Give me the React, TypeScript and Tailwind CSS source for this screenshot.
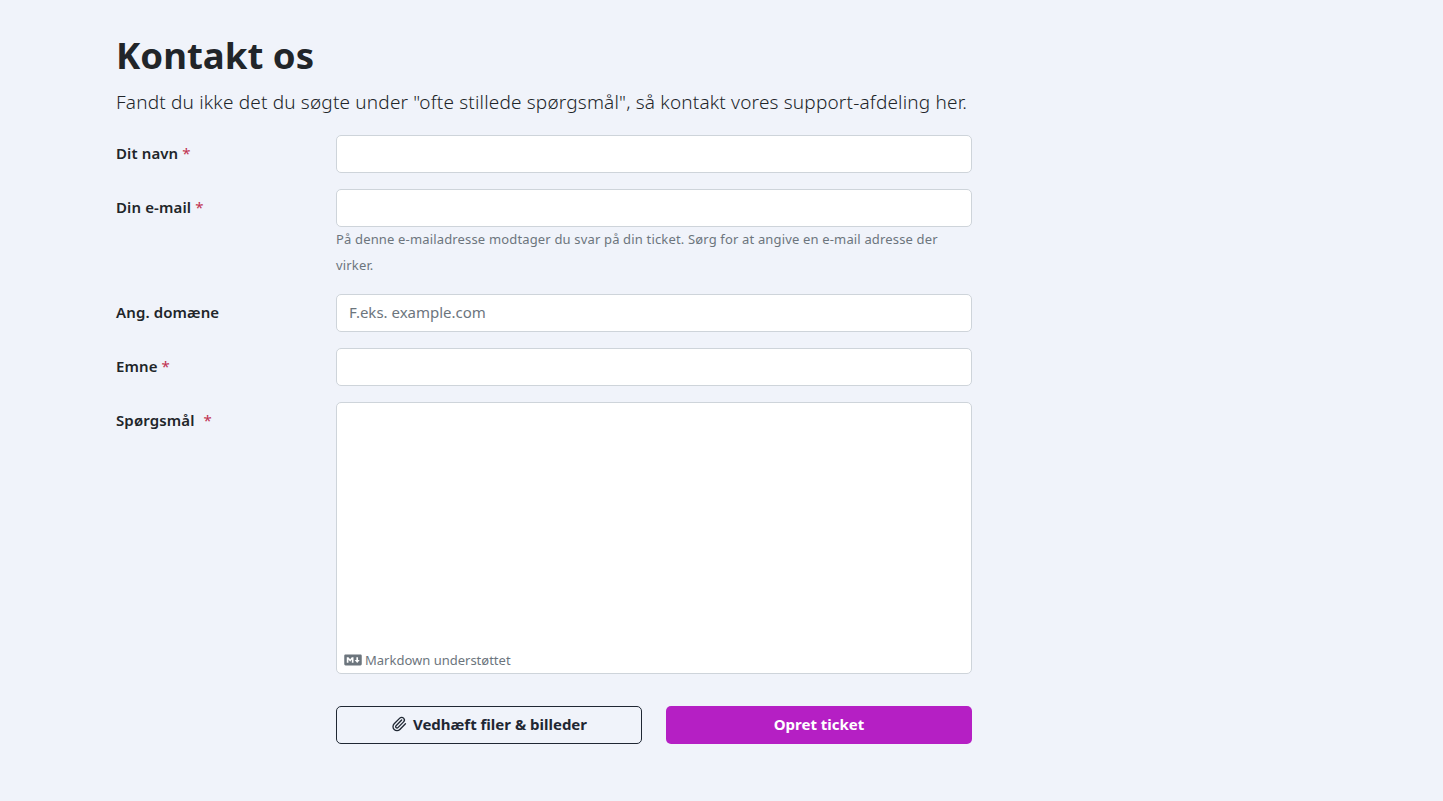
import { FaMarkdown } from 'react-icons/fa';
import { Paperclip } from 'lucide-react';

const inputClass = 'block h-[38px] w-full rounded-[5px] border border-[#ced4da] bg-white px-3 pb-[2px] text-[15px] text-[#212529] placeholder:text-[#6c757d]';

function Label({ text, required, gap }: { text: string; required?: boolean; gap?: string }) {
  return (
    <label className="block w-[220px] shrink-0 pt-[8px] text-[15px] leading-[20px] font-semibold tracking-[0.12px] text-[#212529]">
      {text}
      {required && <span className={`${gap ?? 'ml-[4px]'} font-normal text-[#c0304f]`}>*</span>}
    </label>
  );
}

export default function App() {
  return (
    <div className="min-h-[801px] bg-[#f0f3fa] pl-[116px] pt-[32px] font-['Noto_Sans','Open_Sans',sans-serif] text-[#212529]">
      <div className="w-[856px]">
        <h1 className="text-[36.6px] leading-[46px] font-bold text-[#212529]">Kontakt os</h1>
        <p className="mt-[11px] text-[19px] leading-[27px] font-light tracking-[0.18px] text-[#212529]">
          Fandt du ikke det du søgte under "ofte stillede spørgsmål", så kontakt vores support-afdeling her.
        </p>

        <form className="mt-[19px] flex flex-col gap-4">
          <div className="flex">
            <Label text="Dit navn" required />
            <input type="text" className={inputClass} />
          </div>

          <div className="flex">
            <Label text="Din e-mail" required />
            <div className="w-full">
              <input type="text" className={inputClass} />
              <p className="text-[13px] leading-[25.5px] tracking-[0.16px] text-[#6c757d]">
                På denne e-mailadresse modtager du svar på din ticket. Sørg for at angive en e-mail adresse der virker.
              </p>
            </div>
          </div>

          <div className="flex">
            <Label text="Ang. domæne" />
            <input type="text" placeholder="F.eks. example.com" className={inputClass} />
          </div>

          <div className="flex">
            <Label text="Emne" required />
            <input type="text" className={inputClass} />
          </div>

          <div className="flex">
            <Label text="Spørgsmål" required gap="ml-[9px]" />
            <div className="relative h-[272px] w-full rounded-[5px] border border-[#ced4da] bg-white">
              <textarea className="block h-full w-full resize-none rounded-[5px] bg-transparent" />
              <div className="absolute bottom-[4px] left-[7px] flex items-center gap-[3px] text-[13px] leading-[18px] text-[#6c757d]">
                <FaMarkdown className="h-[14px] w-[18px]" />
                <span>Markdown understøttet</span>
              </div>
            </div>
          </div>

          <div className="mt-[16px] ml-[220px] flex gap-6">
            <button type="button" className="flex h-[38px] w-[306px] items-center justify-center gap-[6px] rounded-[5px] border border-[#1f2733] pb-[2px] text-[15px] font-bold text-[#1f2733]">
              <Paperclip className="h-[16px] w-[16px]" strokeWidth={2} />
              Vedhæft filer &amp; billeder
            </button>
            <button type="button" className="h-[38px] w-[306px] rounded-[5px] bg-[#b51fc4] pb-[2px] text-[15px] font-bold text-white">
              Opret ticket
            </button>
          </div>
        </form>
      </div>
    </div>
  );
}
